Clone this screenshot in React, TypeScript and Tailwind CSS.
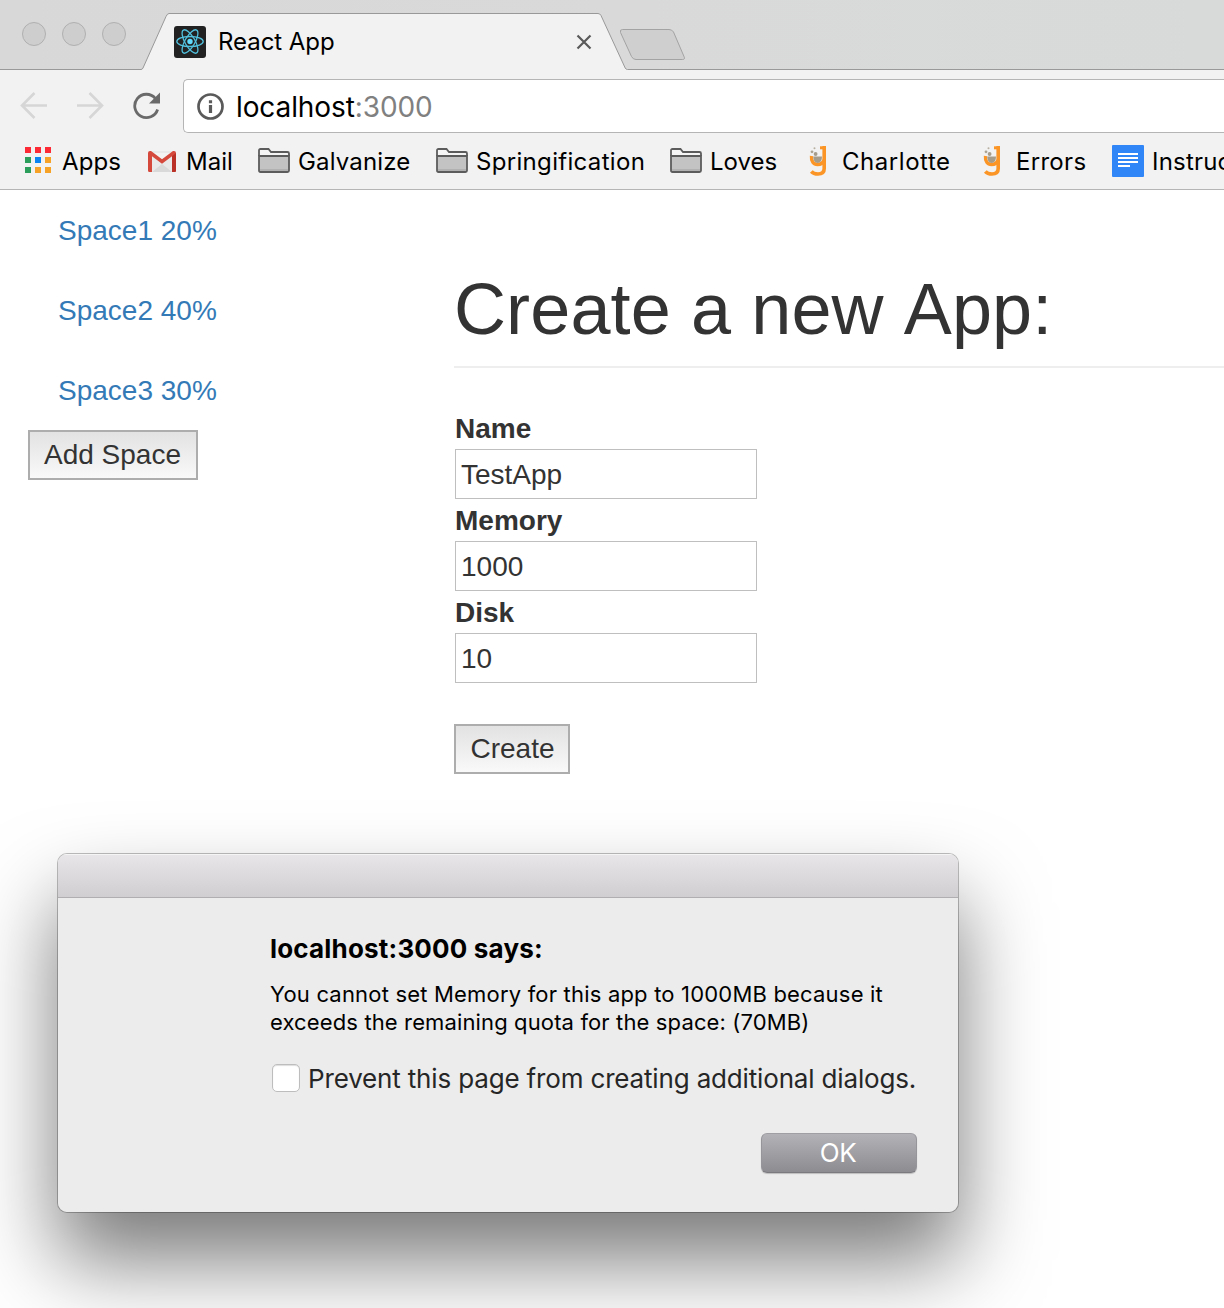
import React from "react";

const sf = "font-['Inter',sans-serif]";

function TrafficLight() {
  return <span className="block size-6 rounded-full border border-[#b0b0b0] bg-[#cecece]" />;
}

function ReactLogo() {
  return (
    <svg className="block size-8" viewBox="0 0 32 32" fill="none">
      <rect width="32" height="32" rx="3" fill="#222" />
      <g stroke="#52c1de" strokeWidth="1.3">
        <ellipse cx="16" cy="15.500" rx="13.200" ry="5" />
        <ellipse cx="16" cy="15.500" rx="13.200" ry="5" transform="rotate(60 16 15.5)" />
        <ellipse cx="16" cy="15.500" rx="13.200" ry="5" transform="rotate(120 16 15.5)" />
      </g>
      <circle cx="16" cy="15.500" r="2.700" fill="#61dafb" />
    </svg>
  );
}

function TabStrip() {
  return (
    <div className="relative h-[70px] bg-linear-to-r from-[#d8d8d8] via-[#d9d9d9] to-[#d8dada]">
      <svg className="absolute inset-0" width="1224" height="70" viewBox="0 0 1224 70">
        <path
          d="M-2 69.5H141Q142.300 69.500 143 68L166 16.500Q167.400 13.500 169 13.500H598Q600 13.500 601 15.500L625.200 68Q626 69.500 627.500 69.500H1226V74H-2Z"
          fill="#f2f2f2"
          stroke="#999"
        />
        <path
          d="M622.500 29.500H669Q672 29.500 673.500 32L684 56.500Q685.500 59.500 682.500 59.500H636Q633 59.500 631.500 56.500L620.500 32.500Q619.500 29.500 622.500 29.500Z"
          fill="#cfcfcf"
          stroke="#a3a3a3"
        />
      </svg>
      <div className="relative flex h-full">
        <div className="flex gap-4 pt-[22px] pl-[22px]">
          <TrafficLight />
          <TrafficLight />
          <TrafficLight />
        </div>
        <div className="ml-12 flex w-[420px] items-center pt-[14px]">
          <ReactLogo />
          <span className="ml-3 text-[24px] tracking-[-0.05px] text-black">React App</span>
          <svg className="mr-[2px] ml-auto block" width="16" height="16" viewBox="0 0 16 16">
            <path d="M1.500 1.500L14.500 14.500M14.500 1.500L1.500 14.500" stroke="#5a5a5a" strokeWidth="2.200" />
          </svg>
        </div>
      </div>
    </div>
  );
}

function AddressRow() {
  return (
    <div className="flex h-[54px] items-center pl-5">
      <svg className="-mt-[2px]" width="28" height="28" viewBox="0 0 28 28" fill="none" stroke="#d6d6d6" strokeWidth="2.600">
        <path d="M27 14.500H3M14.500 2L2 14.500L14.500 27" />
      </svg>
      <svg className="-mt-[2px] ml-7" width="28" height="28" viewBox="0 0 28 28" fill="none" stroke="#d6d6d6" strokeWidth="2.600">
        <path d="M1 14.500H25M13.500 2L26 14.500L13.500 27" />
      </svg>
      <svg className="ml-[28px]" width="30" height="28" viewBox="0 0 30 28" fill="none">
        <path d="M23.300 6.300A11.700 11.700 0 1 0 25.600 17.500" stroke="#6a6a6a" strokeWidth="2.800" />
        <path d="M28 0.500V11.500H17Z" fill="#6a6a6a" />
      </svg>
      <div className="ml-[21px] flex h-full flex-1 items-center rounded-l-[5px] border border-r-0 border-[#b5b5b5] bg-white pl-[13px]">
        <svg width="27" height="27" viewBox="0 0 27 27" fill="none">
          <circle cx="13.500" cy="13.500" r="12" stroke="#5a5a5a" strokeWidth="2.700" />
          <path d="M13.500 7.300V10.300M13.500 12V20" stroke="#5a5a5a" strokeWidth="3.200" />
        </svg>
        <span className="mt-[2px] ml-3 text-[28px] tracking-[-0.1px] whitespace-pre text-black">
          localhost<span className="text-[#808080]">:3000</span>
        </span>
      </div>
    </div>
  );
}

function AppsIcon() {
  const colors = ["#fb2a35", "#fb2a35", "#fb2a35", "#2b9e5b", "#0a84f0", "#f6a226", "#2b9e5b", "#f6a226", "#f6a226"];
  return (
    <svg className="mb-[2px] block" width="26" height="26" viewBox="0 0 26 26">
      {colors.map((c, i) => (
        <rect key={i} x={(i % 3) * 10} y={Math.floor(i / 3) * 10} width="6" height="6" fill={c} />
      ))}
    </svg>
  );
}

function MailIcon() {
  return (
    <svg className="mt-px block" width="28" height="21" viewBox="0 0 28 21">
      <rect x="1" width="26" height="21" rx="1" fill="#e9e9e9" />
      <path d="M4 21L14 13L24 21Z" fill="#d9d9d9" />
      <path d="M4 2H24L14 10Z" fill="#f3f3f3" />
      <path d="M0 2Q0 0 2 0H3L14 8.300L25 0H26Q28 0 28 2V19.500Q28 21 26.500 21H24V5.200L14 12.700L4 5.200V21H1.500Q0 21 0 19.500Z" fill="#d5483c" />
      <path d="M24 5.200L28 2V19.500Q28 21 26.500 21H24Z" fill="#b93127" />
    </svg>
  );
}

function FolderIcon() {
  return (
    <svg className="mb-px block" width="32" height="25" viewBox="0 0 32 25" fill="none">
      <path d="M1 8V2.500Q1 1 2.500 1H10.500L13 4H29.500Q31 4 31 5.500V8" fill="#f5f5f5" stroke="#5c5c5c" strokeWidth="1.800" />
      <path d="M1 8H31V22.500Q31 24 29.500 24H2.500Q1 24 1 22.500Z" fill="#c3c3c3" stroke="#5c5c5c" strokeWidth="1.800" />
      <path d="M2 22H30" stroke="#adadad" strokeWidth="1.600" />
    </svg>
  );
}

function GalvanizeIcon() {
  return (
    <svg className="block" width="18" height="32" viewBox="0 0 18 32" fill="none">
      <path d="M15.200 1V23.500Q15.200 29 9 29Q4.500 29 2.300 26.500" stroke="#fb9525" strokeWidth="3.600" />
      <path d="M11 2.800H15.500" stroke="#fb9525" strokeWidth="3" />
      <path d="M2.500 11C2 16.500 4.500 19.500 8.500 19.500C12 19.500 14 18 15.200 15" stroke="#fb9525" strokeWidth="3.400" />
      <path d="M4.300 11.500H13Q13 18 8.700 18Q4.300 18 4.300 11.500Z" fill="#a59c8b" />
      <circle cx="6.600" cy="9" r="1.900" fill="#a59c8b" />
      <circle cx="3" cy="6.800" r="1.400" fill="#aaa292" />
      <circle cx="5.500" cy="3.300" r="1" fill="#b8b0a2" />
    </svg>
  );
}

function DocsIcon() {
  return (
    <svg className="block" width="32" height="32" viewBox="0 0 32 32">
      <rect width="32" height="32" rx="1" fill="#3086f6" />
      <path d="M6 9H26M6 13H26M6 17H26M6 21H18" stroke="#fff" strokeWidth="2" />
    </svg>
  );
}

function Bookmark({ icon, label, className }: { icon: React.ReactNode; label: string; className: string }) {
  return (
    <div className={"flex shrink-0 items-center " + className}>
      {icon}
      <span className="mt-px whitespace-nowrap">{label}</span>
    </div>
  );
}

function BookmarksBar() {
  return (
    <div className="flex h-[57px] items-center overflow-hidden border-b border-[#b5b5b5] pl-[25px] text-[24px] text-black">
      <Bookmark className="w-[123px] gap-[11px] tracking-[0.1px]" icon={<AppsIcon />} label="Apps" />
      <Bookmark className="w-[110px] gap-[10px]" icon={<MailIcon />} label="Mail" />
      <Bookmark className="w-[178px] gap-[8px] tracking-[0.15px]" icon={<FolderIcon />} label="Galvanize" />
      <Bookmark className="w-[234px] gap-[8px] tracking-[0.32px]" icon={<FolderIcon />} label="Springification" />
      <Bookmark className="w-[139px] gap-[8px]" icon={<FolderIcon />} label="Loves" />
      <Bookmark className="w-[174px] gap-[15px] tracking-[0.55px]" icon={<GalvanizeIcon />} label="Charlotte" />
      <Bookmark className="w-[129px] gap-[15px] tracking-[0.3px]" icon={<GalvanizeIcon />} label="Errors" />
      <Bookmark className="gap-[8px] tracking-[0.2px]" icon={<DocsIcon />} label="Instruc" />
    </div>
  );
}

const pageButton =
  "flex h-[50px] items-center justify-center border-2 border-[#adadad] bg-linear-to-b from-[#e2e2e2] to-[#f9f9f9] text-[28px] leading-[40px] text-[#333]";

function Sidebar() {
  return (
    <div className="w-[426px] shrink-0">
      <nav className="flex flex-col text-[#337ab7]">
        {["Space1 20%", "Space2 40%", "Space3 30%"].map((s) => (
          <a key={s} className="block px-[30px] pt-[21px] pb-[19px]">
            {s}
          </a>
        ))}
      </nav>
      <button className={pageButton + " w-[170px] pr-px"}>Add Space</button>
    </div>
  );
}

function Field({ label, value }: { label: string; value: string }) {
  return (
    <div className="mb-px pl-px">
      <label className="block pt-px font-bold">{label}</label>
      <div className="h-[50px] w-[302px] border border-[#bfbfbf] bg-white pt-[5px] pl-[5px]">{value}</div>
    </div>
  );
}

function CreateForm() {
  return (
    <main className="flex-1 pt-20">
      <h1 className="mb-10 h-[98px] border-b-2 border-[#eee] text-[72px] leading-[79px] tracking-[0.12px] whitespace-nowrap [font-kerning:none]">
        Create a new App:
      </h1>
      <Field label="Name" value="TestApp" />
      <Field label="Memory" value="1000" />
      <Field label="Disk" value="10" />
      <button className={pageButton + " mt-[41px] w-[116px] pl-px"}>Create</button>
    </main>
  );
}

function AlertDialog() {
  return (
    <div
      className={
        sf +
        " absolute top-[853px] left-[57px] flex h-[360px] w-[902px] flex-col overflow-hidden rounded-[10px] border border-black/25 bg-[#ececec] bg-clip-padding text-black shadow-[0_48px_84px_rgba(0,0,0,0.52)]"
      }
    >
      <div className="h-[44px] border-b border-[#b0aeb0] bg-linear-to-b from-[#e8e6e9] to-[#d0ced1] shadow-[inset_0_1px_0_#f5f5f5]" />
      <div className="flex flex-1 flex-col pl-[212px]">
        <h2 className="mt-[34px] text-[26px] leading-[34px] font-bold tracking-[0.18px] whitespace-nowrap">
          localhost:3000 says:
        </h2>
        <p className="mt-[14px] text-[22px] leading-[28px] whitespace-nowrap">
          <span className="tracking-[0.19px]">You cannot set Memory for this app to 1000MB because it</span>
          <br />
          <span className="tracking-[0.13px]">exceeds the remaining quota for the space: (70MB)</span>
        </p>
        <div className="mt-[26px] flex items-center pl-[2px] text-[26px] leading-[34px] tracking-[-0.16px] whitespace-nowrap text-[#262626]">
          <span className="mr-2 mb-[2px] block size-[28px] rounded-[5px] border border-[#bdbdbd] bg-white shadow-[inset_0_1px_1px_#ddd]" />
          <span>Prevent this page from creating additional dialogs.</span>
        </div>
        <button className="mt-[37px] mr-[41px] flex h-[40px] w-[156px] items-center justify-center self-end rounded-[6px] border border-t-[#a09fa4] border-r-[#96959a] border-b-[#7b7a7f] border-l-[#96959a] bg-linear-to-b from-[#b3b2b7] to-[#8d8c91] pr-[2px] pb-[2px] text-[26px] tracking-[-0.5px] text-white shadow-[0_1px_1px_rgba(0,0,0,0.2)]">
          OK
        </button>
      </div>
    </div>
  );
}

export default function App() {
  return (
    <div className="relative h-[1308px] w-[1224px] overflow-hidden bg-white">
      <header className={sf + " h-[190px] bg-[#f2f2f2]"}>
        <TabStrip />
        <div className="pt-[9px]">
          <AddressRow />
          <BookmarksBar />
        </div>
      </header>
      <div className="flex pl-7 font-['Liberation_Sans',Helvetica,sans-serif] text-[28px] leading-[40px] text-[#333]">
        <Sidebar />
        <CreateForm />
      </div>
      <AlertDialog />
    </div>
  );
}
